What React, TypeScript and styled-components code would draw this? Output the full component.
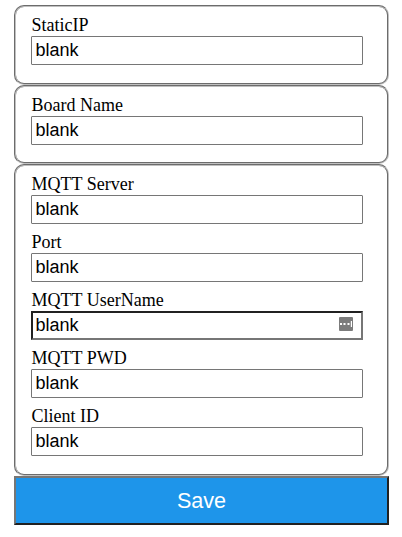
import React from "react";
import styled, { createGlobalStyle } from "styled-components";

const Global = createGlobalStyle`
  * { box-sizing: border-box; }
  body { margin: 0; background: #fff; color: #000; font-family: "Liberation Serif", serif; font-size: 18px; }
`;
const Form = styled.form`
  display: flex; flex-direction: column; width: 375px; margin: 5px 0 0 14px;
`;
const Group = styled.section<{ $height: number }>`
  height: ${p => p.$height}px;
  border: 2px groove #c0c0c0;
  border-radius: 10px;
  padding: 7px 15px 0;
`;
const Field = styled.label`
  display: block; position: relative; height: 58px; line-height: 22px;
`;
const Caption = styled.span`
  display: block; padding-left: 0.5px;
`;
const Input = styled.input<{ $inset?: boolean }>`
  display: block; width: 332px; height: 29px; margin: 0;
  padding: 1px 3px 2px ${p => (p.$inset ? 2.4 : 3.4)}px;
  border: ${p => (p.$inset ? "2px solid" : "1px solid")};
  border-color: ${p => (p.$inset ? "#212121 #767676 #767676 #212121" : "#767676")};
  border-radius: ${p => (p.$inset ? 0 : 1)}px;
  background: #fff; color: #000; font: 18px "Liberation Sans", sans-serif; outline: none;
`;
const Badge = styled.svg`
  position: absolute; left: 308px; top: 28px;
`;
const Save = styled.button`
  height: 49px; padding: 0; border: 2px solid;
  border-color: #767676 #212121 #212121 #767676;
  background: #1e95ea; color: #fff;
  font: 21.6px "Liberation Sans", sans-serif;
`;

const groups = [
  { height: 80, fields: ["StaticIP"] },
  { height: 79, fields: ["Board Name"] },
  { height: 312, fields: ["MQTT Server", "Port", "MQTT UserName", "MQTT PWD", "Client ID"] },
];

export default function App() {
  return (
    <Form>
      <Global />
      {groups.map(g => (
        <Group key={g.fields[0]} $height={g.height}>
          {g.fields.map(name => (
            <Field key={name}>
              <Caption>{name}</Caption>
              <Input defaultValue="blank" $inset={name === "MQTT UserName"} />
              {name === "MQTT UserName" && (
                <Badge width="14" height="14" viewBox="0 0 14 14">
                  <rect width="14" height="14" rx="1" fill="#7c7c7c" />
                  <path d="M1 6h2v2H1zM4.5 6h2v2h-2zM8.5 6h2v2h-2zM11.8 4h1.2v6h-1.2z" fill="#fff" />
                </Badge>
              )}
            </Field>
          ))}
        </Group>
      ))}
      <Save type="button">Save</Save>
    </Form>
  );
}
